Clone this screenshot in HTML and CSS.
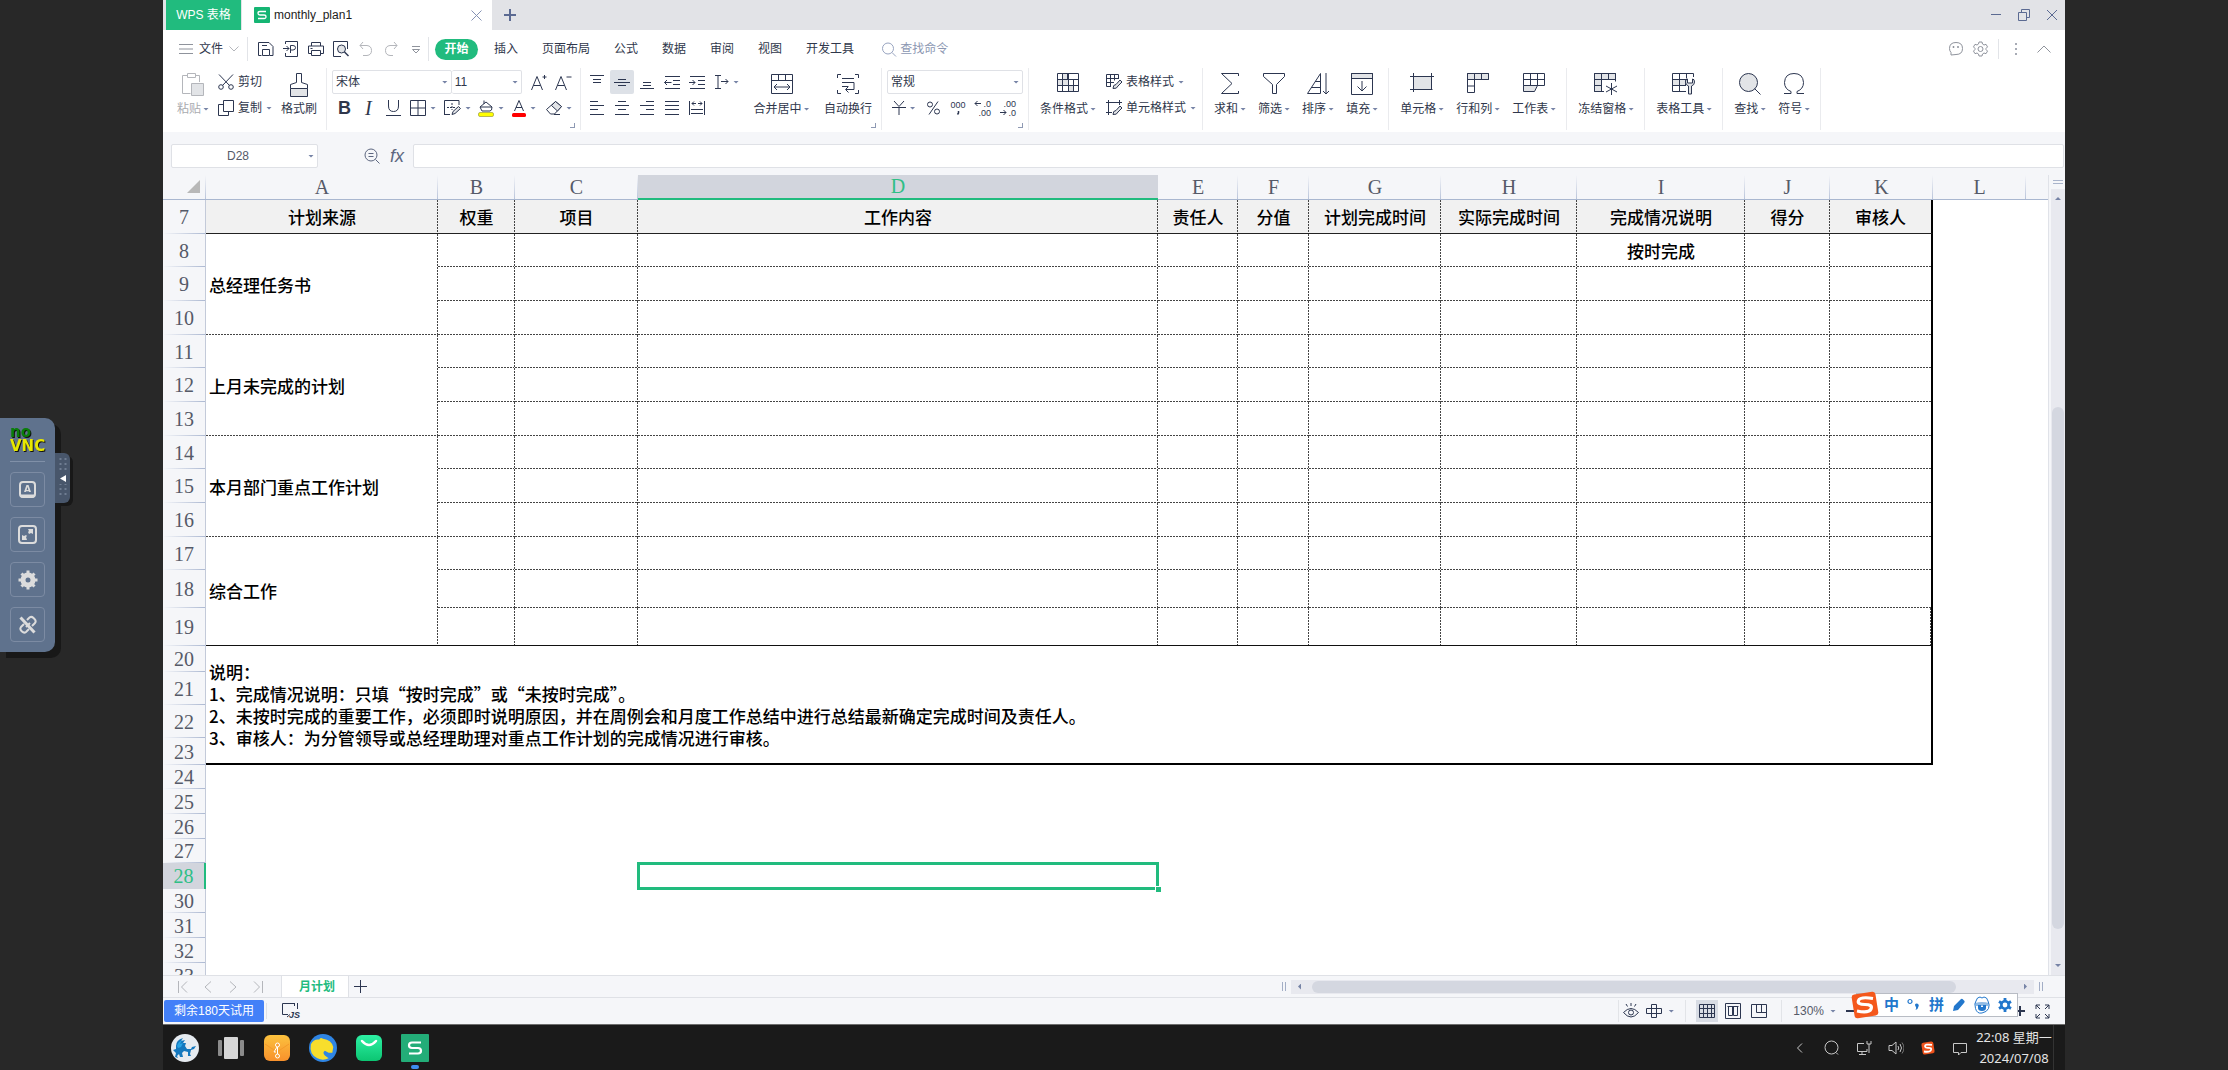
FILE: index.html
```html
<!DOCTYPE html>
<html lang="zh-CN">
<head>
<meta charset="utf-8">
<title>monthly_plan1 - WPS 表格</title>
<link rel="stylesheet" href="styles.css">
</head>
<body>
<aside class="vnc" aria-label="noVNC">
  <div class="vnc-bar">
    <div class="vnc-logo"><span class="vnc-no">no</span><span class="vnc-name">VNC</span></div>
    <button class="vnc-btn" aria-label="键盘"><svg width="19" height="19" viewBox="0 0 19 19"><rect x="2" y="2" width="15" height="15" rx="3" fill="none" stroke="#dcdcdc" stroke-width="2"/><path d="M3 16h13" stroke="#dcdcdc" stroke-width="3"/><text x="9.500" y="12" text-anchor="middle" class="vnc-a">A</text></svg></button>
    <button class="vnc-btn" aria-label="全屏"><svg width="19" height="19" viewBox="0 0 19 19"><rect x="1" y="1" width="17" height="17" rx="3" fill="none" stroke="#dcdcdc" stroke-width="2"/><path d="M10 4h5v5l-2-1-2 1-1-2 1-1zM4 10l2 1 2-1 1 1-1 1 1 3H4z" fill="#dcdcdc"/></svg></button>
    <button class="vnc-btn" aria-label="设置"><svg width="20" height="20" viewBox="0 0 20 20"><circle cx="10" cy="10" r="5" fill="none" stroke="#dcdcdc" stroke-width="5"/><path d="M10 0.500v4M10 15.500v4M0.500 10h4M15.500 10h4M3.500 3.500l3 3M13.500 13.500l3 3M16.500 3.500l-3 3M3.500 16.500l3-3" stroke="#dcdcdc" stroke-width="3"/></svg></button>
    <button class="vnc-btn" aria-label="断开"><svg width="20" height="20" viewBox="0 0 20 20" fill="none" stroke="#dcdcdc" stroke-width="2"><path d="M9 5l2.500-2.500q2-1.500 4 0.500l1 1q2 2 0.500 4L14 11M6 9l-3 3q-1.500 2 0.500 4l0.500 0.500q2 2 4 0.500L11 14M8 12l4-4"/><path d="M2.500 2.500l14 15" stroke-width="3"/></svg></button>
  </div>
  <button class="vnc-handle" aria-label="收起"><svg width="12" height="40" viewBox="0 0 12 40"><path d="M3.500 0v40M8.500 0v40" stroke="#6f7d92" stroke-width="2" stroke-dasharray="2 3"/><path d="M1 14h10v12H1z" fill="#48566b"/><path d="M9 17v7L3 20.500z" fill="#fff"/></svg></button>
</aside>

<main class="app">
  <header class="titlebar">
    <button class="home-tab">WPS 表格</button>
    <div class="doc-tab">
      <svg width="16" height="16" viewBox="0 0 16 16"><rect width="16" height="16" rx="1" fill="#15b573"/><path d="M12 4.500H6Q4 4.500 4 6.200T6 8h4q2 0 2 1.800t-2 1.700H4" fill="none" stroke="#fff" stroke-width="1.300"/></svg>
      <span class="doc-name">monthly_plan1</span>
      <button class="plain" aria-label="关闭标签"><svg class="ic muted" width="11" height="11" viewBox="0 0 11 11"><path d="M.5.5l10 10M10.500.5l-10 10"/></svg></button>
    </div>
    <button class="plain new-tab" aria-label="新建"><svg class="ic slate" width="12" height="12" viewBox="0 0 12 12" stroke-width="2"><path d="M6 0v12M0 6h12"/></svg></button>
    <div class="win-ctl">
      <button class="plain" aria-label="最小化"><svg class="ic slate" width="12" height="12" viewBox="0 0 12 12"><path d="M1 5.500h10"/></svg></button>
      <button class="plain" aria-label="还原"><svg class="ic slate" width="12" height="12" viewBox="0 0 12 12"><path d="M.5 3.500h8v8h-8zM3.500 3.500v-3h8v8h-3"/></svg></button>
      <button class="plain" aria-label="关闭"><svg class="ic slate" width="12" height="12" viewBox="0 0 12 12"><path d="M1 1l10 10M11 1L1 11"/></svg></button>
    </div>
  </header>

  <nav class="menubar">
    <button class="plain file-btn"><svg class="ic grey" width="14" height="12" viewBox="0 0 14 12"><path d="M0 1.500h14M0 6h14M0 10.500h14"/></svg>文件<svg class="ic pale" width="10" height="6" viewBox="0 0 10 6"><path d="M.5.5L5 5 9.500.5"/></svg></button>
    <div class="quick">
      <button class="plain" aria-label="保存"><svg class="ic" width="16" height="16" viewBox="0 0 16 16"><path d="M3.500 14.500h-3V1.500H11l4 4v9h-3M4.500 14.500V8.500h7v6zM4 4.500h5"/></svg></button>
      <button class="plain" aria-label="输出为PDF"><svg class="ic" width="16" height="16" viewBox="0 0 16 16"><path d="M2.500 3V.5h12v15h-12V12M0 7.500h6M3.500 5L6 7.500 3.500 10M7.500 12V4.500H10q2.500 0 2.500 2.200T10 9H8"/></svg></button>
      <button class="plain" aria-label="打印"><svg class="ic" width="16" height="16" viewBox="0 0 16 16"><path d="M3.500 5V1.500h9V5M3.500 12.500h-3V5h15v7.500h-3M3.500 9.500h9v5h-9z"/><path d="M2.500 7.500h2"/></svg></button>
      <button class="plain" aria-label="打印预览"><svg class="ic" width="16" height="16" viewBox="0 0 16 16"><path d="M14.500 8V.5H.5v15H8"/><circle cx="8.500" cy="8" r="4" class="fillg"/><path d="M11.500 11l4 4" stroke-width="1.500"/></svg></button>
      <button class="plain" aria-label="撤销"><svg class="ic pale" width="16" height="16" viewBox="0 0 16 16"><path d="M5 1L2 4.500 5 8M2 4.500h7q4.500.5 4.500 5T9 14.500H5"/></svg></button>
      <button class="plain" aria-label="恢复"><svg class="ic pale" width="16" height="16" viewBox="0 0 16 16"><path d="M11 1l3 3.500L11 8M14 4.500H7q-4.500.5-4.500 5T7 14.500h3"/></svg></button>
      <button class="plain" aria-label="更多"><svg class="ic grey" width="16" height="16" viewBox="0 0 16 16"><path d="M4 5.500h8M4.500 8.500h7L8 12z"/></svg></button>
    </div>
    <div class="menus">
      <button class="plain menu on">开始</button>
      <button class="plain menu">插入</button>
      <button class="plain menu">页面布局</button>
      <button class="plain menu">公式</button>
      <button class="plain menu">数据</button>
      <button class="plain menu">审阅</button>
      <button class="plain menu">视图</button>
      <button class="plain menu">开发工具</button>
    </div>
    <button class="plain find-cmd"><svg class="ic blue" width="15" height="15" viewBox="0 0 15 15"><circle cx="6" cy="6.500" r="5.500"/><path d="M10 10.500l4 4"/></svg>查找命令</button>
    <div class="menu-right">
      <button class="plain" aria-label="反馈"><svg class="ic grey" width="14" height="14" viewBox="0 0 14 14"><path d="M2 13V10.500Q.5 9 .5 6.500.5.500 7 .5t6.500 6q0 6-6.500 6z"/><path d="M4.500 4v2M9 4v2" stroke-width="1.500"/></svg></button>
      <button class="plain" aria-label="设置"><svg class="ic grey" width="15" height="16" viewBox="0 0 15 16"><path d="M5.500 3L6 1h3l.5 2L11 4l2-.7 1.500 2.600L13 7.500v1l1.500 1.600L13 12.700 11 12l-1.500 1L9 15H6l-.5-2L4 12l-2 .7L.5 10.100 2 8.500v-1L.5 5.900 2 3.300 4 4z"/><circle cx="7.500" cy="8" r="2.500"/></svg></button>
      <button class="plain dots" aria-label="更多选项"><svg width="4" height="14" viewBox="0 0 4 14" fill="#8a8f9c"><circle cx="2" cy="2" r="1"/><circle cx="2" cy="7" r="1"/><circle cx="2" cy="12" r="1"/></svg></button>
      <button class="plain" aria-label="折叠功能区"><svg class="ic grey" width="14" height="8" viewBox="0 0 14 8"><path d="M.5 7.500L7 1l6.500 6.500"/></svg></button>
    </div>
  </nav>

  <section class="ribbon" aria-label="开始">
    <div class="group clip">
      <button class="big off"><svg class="ic pale" width="22" height="24" viewBox="0 0 22 24"><path d="M5 2.500H.5v18h8M13 2.500h4.500V9"/><path d="M5.500.5h8v4h-8z"/><path d="M9.500 10.500h12v12h-12z" class="fillg"/></svg><span>粘贴<i class="caret"></i></span></button>
      <div class="stack">
        <button class="mini"><svg class="ic" width="16" height="16" viewBox="0 0 16 16"><path d="M1 .5l10.500 11M15 .5L4.500 11.500"/><circle cx="3" cy="13" r="2.300"/><circle cx="13" cy="13" r="2.300"/></svg>剪切</button>
        <button class="mini"><svg class="ic" width="16" height="16" viewBox="0 0 16 16"><path d="M5.500.5h10v11h-10zM5 4.500H.5v11h10V12"/></svg>复制<i class="caret"></i></button>
      </div>
      <button class="big"><svg class="ic" width="18" height="24" viewBox="0 0 18 24"><path d="M.5 15.500h17v8H.5z" class="fillg"/><path d="M.5 15.500v-4l6-2v-9h5v9l6 2v4"/></svg><span>格式刷</span></button>
    </div>

    <div class="group font">
      <div class="row">
        <label class="pick family"><select aria-label="字体"><option>宋体</option></select><i class="caret"></i></label>
        <label class="pick size"><select aria-label="字号"><option>11</option></select><i class="caret"></i></label>
        <button class="tool grow" aria-label="增大字号"><svg class="ic" width="17" height="17" viewBox="0 0 17 17"><path d="M.5 16L6 2.500 11.500 16M2.500 11.500h7M13.500 1v4M11.500 3h4"/></svg></button>
        <button class="tool grow" aria-label="减小字号"><svg class="ic" width="17" height="17" viewBox="0 0 17 17"><path d="M.5 16L6 2.500 11.500 16M2.500 11.500h7M11.500 3h5"/></svg></button>
      </div>
      <div class="row marks">
        <button class="tool" aria-label="加粗"><b class="tb">B</b></button>
        <button class="tool" aria-label="倾斜"><span class="ti">I</span></button>
        <button class="tool" aria-label="下划线"><svg class="ic" width="15" height="16" viewBox="0 0 15 16"><path d="M2.500 0v6q0 5.500 5 5.500t5-5.500V0M0 15.500h15"/></svg></button>
        <button class="tool" aria-label="边框"><svg class="ic" width="16" height="16" viewBox="0 0 16 16"><path d="M.5.5h15v15H.5zM8 .5v15M.5 8h15"/></svg><i class="caret"></i></button>
        <button class="tool" aria-label="绘制边框"><svg class="ic" width="17" height="16" viewBox="0 0 17 16"><path d="M.5 15V.5H15V5M.5 14.500H6"/><path d="M3 7.500h8M8 3v7" stroke-dasharray="2 1"/><path d="M8 14.500l1-3 5.500-5 2 2-5.500 5z" class="fillg"/></svg><i class="caret"></i></button>
        <button class="tool" aria-label="填充颜色"><svg class="ic" width="16" height="17" viewBox="0 0 16 17"><path d="M2 7l6-5 6 5q0 4-2 4H4zM2 7h12M6 4V.5"/><rect x=".5" y="12.500" width="15" height="4" rx="1.500" fill="#ff0" stroke="#8a8a30" stroke-width=".6"/></svg><i class="caret"></i></button>
        <button class="tool" aria-label="字体颜色"><svg class="ic" width="14" height="17" viewBox="0 0 14 17"><path d="M2.500 11L7 .5 11.500 11M4 7.500h6"/><rect y="13" width="14" height="4" rx="1.500" fill="#f00" stroke="none"/></svg><i class="caret"></i></button>
        <button class="tool" aria-label="清除"><svg class="ic" width="16" height="16" viewBox="0 0 16 16"><path d="M9.500 1.500l6 5-7 7.500H4.500L.5 9.500z"/><path d="M9.500 1.500l6 5-4 4.500L5.500 5.500z" class="fillg"/><path d="M8 14.500h6"/></svg><i class="caret"></i></button>
      </div>
      <i class="corner"></i>
    </div>

    <div class="group align">
      <div>
        <div class="row icons">
          <button class="tool" aria-label="顶端对齐"><svg class="ic" width="16" height="16" viewBox="0 0 16 16"><path d="M1 1.500h14M4 5.500h8M4 8.500h8"/></svg></button>
          <button class="tool on" aria-label="垂直居中"><svg class="ic" width="16" height="16" viewBox="0 0 16 16"><path d="M4 5.500h8M0 8.500h16M4 11.500h8"/></svg></button>
          <button class="tool" aria-label="底端对齐"><svg class="ic" width="16" height="16" viewBox="0 0 16 16"><path d="M4 8.500h8M4 11.500h8M1 14.500h14"/></svg></button>
          <button class="tool" aria-label="减少缩进"><svg class="ic" width="16" height="16" viewBox="0 0 16 16"><path d="M1 2.500h15M9 6.500h7M9 10.500h7M1 14.500h15M.5 8.500h7M3 6L.5 8.500 3 11"/></svg></button>
          <button class="tool" aria-label="增加缩进"><svg class="ic" width="16" height="16" viewBox="0 0 16 16"><path d="M1 2.500h15M9 6.500h7M9 10.500h7M1 14.500h15M0 8.500h6M3.500 6L6 8.500 3.500 11"/></svg></button>
          <button class="tool wide" aria-label="文字方向"><svg class="ic" width="15" height="14" viewBox="0 0 15 14"><path d="M1 .5h6M4 .5v13M1 13.500h6M7 6.500h7M11.500 4L14 6.500 11.500 9"/></svg><i class="caret"></i></button>
        </div>
        <div class="row icons">
          <button class="tool" aria-label="左对齐"><svg class="ic" width="14" height="14" viewBox="0 0 14 14"><path d="M0 .5h8M0 4.500h14M0 8.500h8M0 13.500h14"/></svg></button>
          <button class="tool" aria-label="水平居中"><svg class="ic" width="14" height="14" viewBox="0 0 14 14"><path d="M3 .5h8M0 4.500h14M3 8.500h8M0 13.500h14"/></svg></button>
          <button class="tool" aria-label="右对齐"><svg class="ic" width="14" height="14" viewBox="0 0 14 14"><path d="M6 .5h8M0 4.500h14M6 8.500h8M0 13.500h14"/></svg></button>
          <button class="tool" aria-label="两端对齐"><svg class="ic" width="14" height="14" viewBox="0 0 14 14"><path d="M0 .5h14M0 4.500h14M0 8.500h14M0 13.500h14"/></svg></button>
          <button class="tool" aria-label="分散对齐"><svg class="ic" width="16" height="14" viewBox="0 0 16 14"><path d="M.5 0v14M15.500 0v14M3 2.500h4M9 2.500h4M5 .5l-2 2 2 2M11 .5l2 2-2 2M2 8.500h12M2 12.500h12"/></svg></button>
        </div>
      </div>
      <button class="big"><svg class="ic" width="22" height="22" viewBox="0 0 22 22"><path d="M.5 1.500h21v19H.5zM.5 7.500h21M7.500 1.500v6M14.500 1.500v6M3 14h16M6 11l-3 3 3 3M16 11l3 3-3 3"/></svg><span>合并居中<i class="caret"></i></span></button>
      <button class="big"><svg class="ic" width="22" height="22" viewBox="0 0 22 22"><path d="M.5 5V1.500H4M18 1.500h3.500V5M.5 17v3.500H4M18 20.500h3.500V17M5 5.500h12M5 9.500h12M5 13.500h6M17 9.500v7H9M11.500 13.500l-3 3 3 3"/></svg><span>自动换行</span></button>
      <i class="corner"></i>
    </div>

    <div class="group number">
      <div class="row"><label class="pick format"><select aria-label="数字格式"><option>常规</option></select><i class="caret"></i></label></div>
      <div class="row icons">
        <button class="tool wide" aria-label="货币"><svg class="ic" width="14" height="14" viewBox="0 0 14 14"><path d="M2 0l5 5.500L12 0M0 6.500h14M7 6v8"/></svg><i class="caret"></i></button>
        <button class="tool" aria-label="百分比"><svg class="ic" width="13" height="14" viewBox="0 0 13 14"><circle cx="3" cy="3.500" r="2.500"/><circle cx="10" cy="10.500" r="2.500"/><path d="M11 .5L2 13.500"/></svg></button>
        <button class="tool" aria-label="千位分隔"><svg class="ic" width="18" height="16" viewBox="0 0 18 16"><text x="9" y="8" text-anchor="middle" class="tiny">000</text><path d="M9.500 11v2l-1 1.500" stroke-width="1.500"/></svg></button>
        <button class="tool" aria-label="增加小数位"><svg class="ic" width="18" height="16" viewBox="0 0 18 16"><text x="17" y="7" text-anchor="end" class="tiny">.0</text><text x="17" y="16" text-anchor="end" class="tiny">.00</text><path d="M1 3.500h6M3.500 1L1 3.500 3.500 6"/></svg></button>
        <button class="tool" aria-label="减少小数位"><svg class="ic" width="18" height="16" viewBox="0 0 18 16"><text x="17" y="7" text-anchor="end" class="tiny">.00</text><text x="17" y="16" text-anchor="end" class="tiny">.0</text><path d="M1 12.500h6M4.500 10L7 12.500 4.500 15"/></svg></button>
      </div>
      <i class="corner"></i>
    </div>

    <div class="group style">
      <button class="big"><svg class="ic" width="22" height="20" viewBox="0 0 22 20"><path d="M5.500.5h5v6h-5zM.5 6.500h11v6H.5zM11.500 12.500h5v6h-5z" class="fillg"/><path d="M.5.5h21v18H.5zM.5 6.500h21M.5 12.500h21M5.500.5v18M11.500.5v12M16.500 6.500v12"/></svg><span>条件格式<i class="caret"></i></span></button>
      <div class="stack">
        <button class="mini"><svg class="ic" width="16" height="16" viewBox="0 0 16 16"><path d="M5 12.500H.5V.5h12V5M.5 4.500h12M.5 8.500H8M4.500.5v12M8.500.5v6"/><path d="M7 14.500q0-4 3-4l4-4.500 2 2-4 4q-1 3-5 2.500z" class="fillg"/></svg>表格样式<i class="caret"></i></button>
        <button class="mini"><svg class="ic" width="16" height="16" viewBox="0 0 16 16"><path d="M2.500 0v15M0 2.500h16M13.500 0v5M0 12.500h6"/><path d="M7 14.500q0-4 3-4l4-4.500 2 2-4 4q-1 3-5 2.500z" class="fillg"/></svg>单元格样式<i class="caret"></i></button>
      </div>
    </div>

    <div class="group">
      <button class="big"><svg class="ic" width="22" height="22" viewBox="0 0 22 22"><path d="M19.500 3V.5h-17L13 10.500 2.500 20.500h17V18"/></svg><span>求和<i class="caret"></i></span></button>
      <button class="big"><svg class="ic" width="22" height="22" viewBox="0 0 22 22"><path d="M.5.5h21v3l-8 8v9h-4v-9l-9-8z"/></svg><span>筛选<i class="caret"></i></span></button>
      <button class="big"><svg class="ic" width="22" height="22" viewBox="0 0 22 22"><path d="M.5 20.500L13.500.5v20M.5 20.500h13M4 14.500h9.500M8 8.500h5.500M19 0v21M16 18l3 3 3-3"/></svg><span>排序<i class="caret"></i></span></button>
      <button class="big"><svg class="ic" width="22" height="22" viewBox="0 0 22 22"><path d="M.5.5h21v5H.5z" class="fillg"/><path d="M.5.5h21v21H.5zM11 8v10M6.500 13.500L11 18l4.500-4.500"/></svg><span>填充<i class="caret"></i></span></button>
    </div>

    <div class="group">
      <button class="big"><svg class="ic" width="24" height="20" viewBox="0 0 24 20"><path d="M3.500 3.500h18v13h-18z" class="fillg"/><path d="M3.500 0v19M21.500 0v14M0 3.500h24M0 16.500h19M20.500 16.500h2"/></svg><span>单元格<i class="caret"></i></span></button>
      <button class="big"><svg class="ic" width="22" height="20" viewBox="0 0 22 20"><path d="M.5.5h21v6H.5z" class="fillg"/><path d="M.5.5h21v6H.5zM.5 6.500h7v13h-7zM7.500.5v6M14.500.5v6M.5 13h7"/></svg><span>行和列<i class="caret"></i></span></button>
      <button class="big"><svg class="ic" width="22" height="20" viewBox="0 0 22 20"><path d="M.5 12.500h14l-3 6H.5z" class="fillg"/><path d="M.5.5h21v12H.5zM.5 6.500h21M7.500.5v12M14.500.5v12"/></svg><span>工作表<i class="caret"></i></span></button>
    </div>
    <div class="group">
      <button class="big"><svg class="ic" width="24" height="22" viewBox="0 0 24 22"><path d="M.5.5h21v6h-14v12h-7z" class="fillg"/><path d="M.5.5h21v8M.5.5v18H10M.5 6.500h21M.5 12.500h7M7.500.5v18M14.500.5v6M17.500 10v12M12 13l11 6M12 19l11-6"/></svg><span>冻结窗格<i class="caret"></i></span></button>
    </div>
    <div class="group">
      <button class="big"><svg class="ic" width="24" height="22" viewBox="0 0 24 22"><path d="M.5 6.500h13v6H.5z" class="fillg"/><path d="M.5.5h21V4M.5.5v18H14M.5 6.500H14M.5 12.500H14M7.500.5v18M14.500.5v5"/><path d="M16.500 21v-8q-3-1-3-4t2-3v4h5V6q2 0 2 3t-3 4v8z" class="fillg"/></svg><span>表格工具<i class="caret"></i></span></button>
    </div>
    <div class="group last">
      <button class="big"><svg class="ic" width="22" height="22" viewBox="0 0 22 22"><circle cx="9.500" cy="9.500" r="9" class="fillg"/><path d="M15.500 15.500l6 6"/></svg><span>查找<i class="caret"></i></span></button>
      <button class="big"><svg class="ic" width="22" height="22" viewBox="0 0 22 22"><path d="M1 20.500h7v-2Q1.500 16 1.500 9.500 2 .5 11 .5t9.500 9q0 6.500-6.500 9v2h7"/></svg><span>符号<i class="caret"></i></span></button>
    </div>
  </section>

  <div class="formula">
    <label class="pick name"><input aria-label="名称框" value="D28"><i class="caret"></i></label>
    <button class="plain" aria-label="缩放"><svg class="ic grey2" width="16" height="16" viewBox="0 0 16 16"><circle cx="7" cy="7" r="6"/><path d="M4.500 5.500h5M4.500 8.500h5M11.500 11.500l4 4"/></svg></button>
    <button class="plain fx">fx</button>
    <input class="fx-input" aria-label="编辑栏">
  </div>

  <div class="sheet-wrap">
    <div class="sheet">
      <table class="grid">
        <colgroup><col class="c-head"><col class="c-a"><col class="c-b"><col class="c-c"><col class="c-d"><col class="c-e"><col class="c-f"><col class="c-g"><col class="c-h"><col class="c-i"><col class="c-j"><col class="c-k"><col class="c-l"><col></colgroup>
        <thead><tr><th class="all"><svg width="13" height="13" viewBox="0 0 13 13"><path d="M13 0v13H0z" fill="#b8b8b8"/></svg></th><th>A</th><th>B</th><th>C</th><th class="on">D</th><th>E</th><th>F</th><th>G</th><th>H</th><th>I</th><th>J</th><th>K</th><th>L</th><th></th></tr></thead>
        <tbody>
          <tr class="h34 title"><th>7</th><td>计划来源</td><td>权重</td><td>项目</td><td>工作内容</td><td>责任人</td><td>分值</td><td>计划完成时间</td><td>实际完成时间</td><td>完成情况说明</td><td>得分</td><td>审核人</td><td colspan="2"></td></tr>
          <tr class="h33 line"><th>8</th><td rowspan="3" class="src">总经理任务书</td><td></td><td></td><td></td><td></td><td></td><td></td><td></td><td>按时完成</td><td></td><td></td><td colspan="2"></td></tr>
          <tr class="h34 line"><th>9</th><td></td><td></td><td></td><td></td><td></td><td></td><td></td><td></td><td></td><td></td><td colspan="2"></td></tr>
          <tr class="h34 line"><th>10</th><td></td><td></td><td></td><td></td><td></td><td></td><td></td><td></td><td></td><td></td><td colspan="2"></td></tr>
          <tr class="h33 line"><th>11</th><td rowspan="3" class="src">上月未完成的计划</td><td></td><td></td><td></td><td></td><td></td><td></td><td></td><td></td><td></td><td></td><td colspan="2"></td></tr>
          <tr class="h34 line"><th>12</th><td></td><td></td><td></td><td></td><td></td><td></td><td></td><td></td><td></td><td></td><td colspan="2"></td></tr>
          <tr class="h34 line"><th>13</th><td></td><td></td><td></td><td></td><td></td><td></td><td></td><td></td><td></td><td></td><td colspan="2"></td></tr>
          <tr class="h33 line"><th>14</th><td rowspan="3" class="src">本月部门重点工作计划</td><td></td><td></td><td></td><td></td><td></td><td></td><td></td><td></td><td></td><td></td><td colspan="2"></td></tr>
          <tr class="h34 line"><th>15</th><td></td><td></td><td></td><td></td><td></td><td></td><td></td><td></td><td></td><td></td><td colspan="2"></td></tr>
          <tr class="h34 line"><th>16</th><td></td><td></td><td></td><td></td><td></td><td></td><td></td><td></td><td></td><td></td><td colspan="2"></td></tr>
          <tr class="h33 line"><th>17</th><td rowspan="3" class="src end">综合工作</td><td></td><td></td><td></td><td></td><td></td><td></td><td></td><td></td><td></td><td></td><td colspan="2"></td></tr>
          <tr class="h38 line"><th>18</th><td></td><td></td><td></td><td></td><td></td><td></td><td></td><td></td><td></td><td></td><td colspan="2"></td></tr>
          <tr class="h38 line end"><th>19</th><td></td><td></td><td></td><td></td><td></td><td></td><td></td><td></td><td></td><td></td><td colspan="2"></td></tr>
          <tr class="h26"><th>20</th><td rowspan="4" colspan="11" class="note">说明：<br>1、完成情况说明：只填“按时完成”或“未按时完成”。<br>2、未按时完成的重要工作，必须即时说明原因，并在周例会和月度工作总结中进行总结最新确定完成时间及责任人。<br>3、审核人：为分管领导或总经理助理对重点工作计划的完成情况进行审核。</td><td colspan="2"></td></tr>
          <tr class="h33"><th>21</th><td colspan="2"></td></tr>
          <tr class="h33"><th>22</th><td colspan="2"></td></tr>
          <tr class="h27"><th>23</th><td colspan="2"></td></tr>
          <tr class="h24"><th>24</th><td colspan="13"></td></tr>
          <tr class="h25"><th>25</th><td colspan="13"></td></tr>
          <tr class="h25"><th>26</th><td colspan="13"></td></tr>
          <tr class="h24"><th>27</th><td colspan="13"></td></tr>
          <tr class="h26"><th class="on">28</th><td colspan="3"></td><td class="sel"><i></i></td><td colspan="9"></td></tr>
          <tr class="h24"><th>30</th><td colspan="13"></td></tr>
          <tr class="h25"><th>31</th><td colspan="13"></td></tr>
          <tr class="h25"><th>32</th><td colspan="13"></td></tr>
          <tr class="h25"><th>33</th><td colspan="13"></td></tr>
        </tbody>
      </table>
    </div>
    <div class="vscroll">
      <i class="split"></i>
      <div class="vtrack"><i class="tri up"></i><i class="vthumb"></i><i class="caret"></i></div>
    </div>
  </div>

  <div class="tabs">
    <div class="tab-nav">
      <button class="plain" aria-label="第一张"><svg class="ic pale" width="10" height="12" viewBox="0 0 10 12"><path d="M.5 0v12M9 .5L3.500 6 9 11.500"/></svg></button>
      <button class="plain" aria-label="上一张"><svg class="ic pale" width="10" height="12" viewBox="0 0 10 12"><path d="M8 .5L2 6l6 5.500"/></svg></button>
      <button class="plain" aria-label="下一张"><svg class="ic pale" width="10" height="12" viewBox="0 0 10 12"><path d="M2 .5L8 6l-6 5.500"/></svg></button>
      <button class="plain" aria-label="最后一张"><svg class="ic pale" width="10" height="12" viewBox="0 0 10 12"><path d="M9.500 0v12M1 .5L6.500 6 1 11.500"/></svg></button>
    </div>
    <button class="sheet-tab">月计划</button>
    <button class="plain add" aria-label="新建工作表"><svg class="ic" width="13" height="13" viewBox="0 0 13 13"><path d="M6.500 0v13M0 6.500h13"/></svg></button>
    <div class="hscroll"><i class="bars"></i><div class="htrack"><i class="tri left"></i><i class="hthumb"></i><i class="tri right"></i></div><i class="bars"></i></div>
  </div>

  <footer class="status">
    <button class="trial">剩余180天试用</button>
    <button class="plain macro" aria-label="宏"><svg class="ic" width="17" height="16" viewBox="0 0 17 16"><path d="M6 11.500H.5V.5h12M15.500 0v6M12.500 0v3M5 14l3-2.500"/><text x="7" y="15" class="js">JS</text></svg></button>
    <div class="status-right">
      <div class="seg eye">
        <button class="plain" aria-label="护眼模式"><svg class="ic" width="16" height="16" viewBox="0 0 16 16"><path d="M.5 9.500Q8 1.500 15.500 9.500 8 18.500.5 9.500zM8 0v3M3 1l1.500 2.500M13 1l-1.500 2.500"/><circle cx="8" cy="9.500" r="2.500"/></svg></button>
        <button class="plain" aria-label="阅读模式"><svg class="ic" width="16" height="16" viewBox="0 0 16 16"><path d="M5.500 1.500h5v13h-5zM.5 5.500h15v5H.5z"/></svg><i class="caret"></i></button>
      </div>
      <div class="seg views">
        <button class="plain on" aria-label="普通视图"><svg class="ic" width="16" height="14" viewBox="0 0 16 14"><path d="M.5.500h15v13H.5zM.5 4.500h15M.5 9.500h15M4.500.5v13M8.500.5v13M12.500.5v13"/></svg></button>
        <button class="plain" aria-label="页面布局"><svg class="ic" width="16" height="16" viewBox="0 0 16 16"><path d="M.5.5h15v15H.5zM2.500 3.500h11M3.500 3.500v9h4v-9M8.500 3.500v9h4v-9"/></svg></button>
        <button class="plain" aria-label="分页预览"><svg class="ic" width="16" height="14" viewBox="0 0 16 14"><path d="M.5.5h15v13H.5zM5.500.5v8h5v-8M15 8.500h-5"/></svg></button>
      </div>
      <div class="seg zoom">
        <button class="plain">130%<i class="caret"></i></button>
        <button class="plain" aria-label="缩小"><svg class="ic" width="10" height="10" viewBox="0 0 10 10" stroke-width="2"><path d="M0 5h10"/></svg></button>
        <button class="plain plus" aria-label="放大"><svg class="ic" width="10" height="10" viewBox="0 0 10 10" stroke-width="2"><path d="M0 5h10M5 0v10"/></svg></button>
        <button class="plain" aria-label="全屏显示"><svg class="ic" width="15" height="15" viewBox="0 0 15 15"><path d="M1 5V1h4M1 1l4 4M10 1h4v4M14 1l-4 4M1 10v4h4M1 14l4-4M14 10v4h-4M14 14l-4-4"/></svg></button>
      </div>
      <div class="ime">
        <svg class="ime-logo" width="28" height="28" viewBox="0 0 28 28"><rect x="2" y="2" width="24" height="24" rx="3" fill="#f4581c" transform="rotate(-9 14 14)"/><path d="M22 7.500Q9 5.500 7.500 9.500T14 13.500t6 4.500-14 2" fill="none" stroke="#fff" stroke-width="3.200"/></svg>
        <span>中</span>
        <svg width="14" height="14" viewBox="0 0 14 14"><circle cx="3" cy="3.500" r="2" fill="none" stroke="#2277cc" stroke-width="1.200"/><path d="M8 6.500a2 2 0 1 1 3.500 2Q11 11.500 8.500 12 9.500 10.500 9 9 8 8 8 6.500z" fill="#2277cc"/></svg>
        <span>拼</span>
        <svg width="14" height="14" viewBox="0 0 14 14"><path d="M1 13l1-5L8.500 1.500q1-1 2-.5l2 2q.5 1-.5 2L6 12z" fill="#2277cc"/></svg>
        <svg width="16" height="18" viewBox="0 0 16 18"><path d="M2 5Q3 1 6 1l2 1 2-1q3 0 4 4 2 4 .5 7.500T8 17t-6.500-4.500T2 5z" fill="none" stroke="#2277cc"/><path d="M1 7q7-2 14 0l-1 3H2z" fill="#2277cc" opacity=".5"/><path d="M4 9h3v2h2V9h3v3q0 3-4 3t-4-3z" fill="#2277cc"/></svg>
        <svg width="14" height="14" viewBox="0 0 14 14"><circle cx="7" cy="7" r="3.700" fill="none" stroke="#2277cc" stroke-width="2.600"/><path d="M7 0v3M7 11v3M1 3.500l2.500 1.500M10.500 9l2.500 1.500M13 3.500L10.500 5M3.500 9L1 10.500" stroke="#2277cc" stroke-width="2.800"/></svg>
      </div>
    </div>
  </footer>

  <div class="taskbar">
    <div class="apps">
      <button class="plain" aria-label="开始菜单"><svg width="28" height="28" viewBox="0 0 28 28"><circle cx="14" cy="14" r="14" fill="#e6ebf0"/><path d="M5 12Q5 6 12 4l-2 3 4-1-2 3 3 0-1 3 2 3 4 0 1-2 4-1-2 3-3 1-1 4 1 2-3 0 0-4-4-1-2 2 1 4-3 0-1-3-2 2 1 2-3-1 1-4-3-3 3-1z" fill="#1478be"/><path d="M6 12q1-4 5-6l-2 4 3-1-2 4-3 1z" fill="#29a3e3"/></svg></button>
      <button class="plain" aria-label="任务视图"><svg width="28" height="24" viewBox="0 0 28 24"><rect x="7" y="1" width="14" height="22" rx="1" fill="#d6d6d6"/><rect x="1" y="4" width="4" height="16" rx="1" fill="#8c8c8c"/><rect x="23" y="4" width="4" height="16" rx="1" fill="#8c8c8c"/></svg></button>
      <button class="plain" aria-label="压缩工具"><svg width="28" height="28" viewBox="0 0 28 28"><defs><linearGradient id="or" x2="0" y2="1"><stop stop-color="#fcc23e"/><stop offset="1" stop-color="#f8912c"/></linearGradient></defs><rect x="1" y="1" width="26" height="26" rx="6" fill="url(#or)"/><path d="M2 10l12 8 12-8" fill="none" stroke="#f59a2a"/><path d="M14.500 10v12M14 13l-3 5h2" stroke="#fff" fill="none"/><circle cx="14.500" cy="11" r="2" fill="#f9a035" stroke="#fff"/><circle cx="14.500" cy="22" r="2" fill="#f9a035" stroke="#fff"/></svg></button>
      <button class="plain" aria-label="浏览器"><svg width="28" height="28" viewBox="0 0 30 30"><circle cx="15" cy="15" r="15" fill="#2f85e4"/><path d="M2 11Q5 5 11 6q1-3 4-1 9 1 11 9l-1 6-4 0-4-2q-3 2 0 5l4 3q-6 3-12 0Q0 22 2 11z" fill="#f8de2c"/></svg></button>
      <button class="plain" aria-label="应用商店"><svg width="28" height="28" viewBox="0 0 28 28"><defs><linearGradient id="gr" x2="0" y2="1"><stop stop-color="#2df0a4"/><stop offset="1" stop-color="#0cc572"/></linearGradient></defs><rect x="1" y="1" width="26" height="26" rx="6" fill="url(#gr)"/><path d="M7 7q7 8 14 0" fill="none" stroke="#fff" stroke-width="2.500" stroke-linecap="round"/></svg></button>
      <button class="plain active" aria-label="WPS 表格"><svg width="28" height="28" viewBox="0 0 28 28"><rect width="28" height="28" rx="1" fill="#23ad78"/><path d="M20 8.500h-9q-3 0-3 2.700T11 14h6q3 0 3 2.700t-3 2.800H8" fill="none" stroke="#fff" stroke-width="2.200"/></svg></button>
    </div>
    <div class="tray">
      <svg class="tray-ic" width="16" height="16" viewBox="0 0 16 16"><path d="M10 3.500L5.500 8l4.500 4.500"/></svg>
      <svg class="tray-ic" width="16" height="16" viewBox="0 0 16 16"><circle cx="7.500" cy="7.500" r="6.500"/><path d="M12 12.500l2 2"/></svg>
      <svg class="tray-ic" width="16" height="16" viewBox="0 0 16 16"><path d="M8 3.500H1.500v8H11V9M6 11.500v3M3 14.500h7M11 1v3h4V1M13 4v9"/></svg>
      <svg class="tray-ic" width="16" height="16" viewBox="0 0 16 16"><path d="M1 5.500h3L8 2v12L4 10.500H1zM10 6q1.500 2 0 4M12 4q3 4 0 8"/><path d="M14 2.500q4 5.500 0 11" stroke="#777"/></svg>
      <svg width="16" height="16" viewBox="0 0 16 16"><rect x="2" y="2" width="12" height="12" rx="2" fill="#f0531c" transform="rotate(-9 8 8)"/><path d="M12 4.800Q5 4 5 6t3.500 1.800T11 10t-7 1.500" fill="none" stroke="#fff" stroke-width="1.800"/></svg>
      <svg class="tray-ic" width="16" height="16" viewBox="0 0 16 16"><path d="M1.500 3.500h13v9H9L6.500 15v-2.500h-5z"/></svg>
    </div>
    <time class="clock">22:08 星期一<br>2024/07/08</time>
    <i class="desk"></i>
  </div>
</main>
</body>
</html>
```
FILE: styles.css
```css
* { box-sizing: border-box; }

body {
  margin: 0;
  background: #282828;
  color: #2f374b;
  font: 12px/16px "Liberation Sans", "Noto Sans CJK SC", sans-serif;
}

button, input, select {
  font: inherit;
  color: inherit;
  margin: 0;
  padding: 0;
  border: 0;
  background: none;
  border-radius: 0;
}

svg { display: block; flex: none; }

.app {
  margin: 0 163px;
  height: 100vh;
  display: flex;
  flex-direction: column;
  background: #f5f6f9;
  overflow: hidden;
}

.ic { fill: none; stroke: #2c3650; overflow: visible; }
.ic.grey { stroke: #8f939c; }
.ic.grey2 { stroke: #5d6780; }
.ic.pale { stroke: #b4b6bb; }
.ic.blue { stroke: #98a4c0; }
.ic.slate { stroke: #5b6a92; }
.ic.muted { stroke: #8592b4; }
.ic .fillg { fill: #e2e4e7; }
.ic text { stroke: none; fill: #2c3650; }

.caret {
  flex: none;
  display: block;
  width: 6px;
  height: 3px;
  background: #7683a6;
  clip-path: polygon(0 0, 100% 0, 50% 100%);
}

.plain { display: flex; align-items: center; justify-content: center; flex: none; }

/* title bar */
.titlebar { flex: none; display: flex; height: 30px; background: #e2e3e7; padding-left: 3px; }
.home-tab { width: 75px; background: #21bb7e; color: #fff; }
.doc-tab { width: 250px; background: #fff; display: flex; align-items: center; padding: 0 10px 0 12px; gap: 4px; margin-left: 1px; }
.doc-name { flex: 1; color: #1c1c1c; }
.new-tab { width: 36px; }
.win-ctl { margin-left: auto; display: flex; gap: 16px; padding-right: 7px; }

/* menu bar */
.menubar { flex: none; height: 38px; background: #fff; display: flex; align-items: center; padding-right: 14px; }
.file-btn { margin-left: 16px; gap: 6px; padding-right: 8px; height: 24px; border-right: 1px solid #e2e4e8; }
.quick { display: flex; gap: 9px; padding: 0 4px 0 10px; height: 24px; border-right: 1px solid #e2e4e8; }
.menus { display: flex; padding-left: 6px; gap: 24px; }
.menu.on { width: 43px; height: 21px; border-radius: 11px; background: #21bb7e; color: #fff; font-weight: 700; }
.menu.on + .menu { margin-left: -8px; }
.find-cmd { margin-left: 28px; gap: 3px; color: #8c97b2; }
.menu-right { margin-left: auto; display: flex; align-items: center; gap: 10px; }
.menu-right .dots { padding: 0 9px 0 15px; height: 20px; border-left: 1px solid #e2e4e8; }

/* ribbon */
.ribbon { flex: none; height: 64px; background: #fff; display: flex; }
.group { position: relative; flex: none; height: 62px; padding: 2px 10px 0 11px; display: flex; gap: 12px; border-right: 1px solid #eaebee; white-space: nowrap; }
.group > .corner { position: absolute; right: 5px; bottom: 2px; width: 5px; height: 5px; border: solid #8e99b3; border-width: 0 1px 1px 0; }
.big { display: flex; flex-direction: column; align-items: center; justify-content: space-between; height: 47px; padding-top: 3px; }
.big span { display: flex; align-items: center; gap: 2px; }
.big.off { color: #a9abb0; }
.stack { display: flex; flex-direction: column; gap: 6px; padding-top: 2px; }
.mini { display: flex; align-items: center; gap: 4px; height: 20px; }
.row { display: flex; align-items: center; height: 24px; }
.row + .row { margin-top: 1px; height: 26px; }
.tool { display: flex; align-items: center; justify-content: center; gap: 4px; height: 24px; flex: none; }
.tool.on { background: #dde1e7; border-radius: 2px; }

.clip { padding: 2px 9px 0 14px; gap: 9px; }

.font, .number { flex-direction: column; gap: 0; padding: 2px 5px 0; }
.font { width: 254px; }
.number { width: 147px; }
.pick { display: flex; align-items: center; height: 24px; border: 1px solid #dfe1e6; border-radius: 2px; background: #fff; padding-right: 3px; }
.pick select, .pick input { appearance: none; flex: 1; min-width: 0; padding-left: 3px; }
.family { width: 121px; }
.size { width: 71px; border-left: 0; }
.format { width: 137px; }
.grow { width: 24px; }
.grow:nth-child(3) { margin-left: 5px; }
.marks { padding-left: 6px; }
.marks .tool { width: 34px; justify-content: flex-start; }
.marks .tool:nth-child(-n+3) { width: 24px; }
.tb { font-size: 18px; }
.ti { font: italic 20px/20px "Liberation Serif", serif; padding-left: 3px; }

.align { width: 301px; padding: 2px 9px 0 4px; gap: 0; justify-content: space-between; }
.align > .big + .big { padding-left: 4px; }
.icons { gap: 1px; }
.icons .tool { width: 24px; }
.icons .tool.wide { width: 33px; }
.tiny { font-size: 9px; }
.style { padding-right: 6px; gap: 10px; }

/* formula bar */
.formula { flex: none; display: flex; align-items: center; padding: 12px 1px 7px 8px; }
.pick.name { width: 147px; margin-right: 46px; }
.name input { text-align: center; color: #555b69; padding: 0 4px 0 0; }
.fx { font: italic 18px/20px "Liberation Sans", sans-serif; color: #5d6780; margin: 0 9px 0 10px; }
.fx-input { flex: 1; height: 24px; border: 1px solid #dfe1e6; border-radius: 2px; background: #fff; }

/* sheet */
.sheet-wrap { flex: 1; min-height: 0; display: flex; }
.sheet { flex: 1; min-width: 0; overflow: hidden; background: #fff; }
.grid { width: 100%; table-layout: fixed; border-collapse: separate; border-spacing: 0; }
.c-head { width: 43px; }
.c-a { width: 232px; }
.c-b { width: 77px; }
.c-c { width: 123px; }
.c-d { width: 520px; }
.c-e { width: 80px; }
.c-f { width: 71px; }
.c-g { width: 132px; }
.c-h { width: 136px; }
.c-i { width: 168px; }
.c-j { width: 85px; }
.c-k { width: 103px; }
.c-l { width: 93px; }

.grid th {
  padding: 0;
  font: 20px/20px "Liberation Serif", serif;
  color: #555a68;
  background: #f5f6f9;
}
.grid thead th {
  height: 25px;
  padding-bottom: 1px;
  border-bottom: 1px solid #a9b7d0;
  background: linear-gradient(#f5f6f9, #b9c4da) right / 1px 100% no-repeat #f5f6f9;
}
.grid thead th:last-child { background: #f5f6f9; }
.grid thead th.on { background: #d2d5dd; color: #2fbf86; border-bottom: 2px solid #21bb7e; }
.all svg { margin-left: 24px; }
.grid tbody th {
  border-right: 1px solid #c3cad9;
  background: linear-gradient(90deg, #f5f6f9, #adb9d2) bottom / 100% 1px no-repeat #f5f6f9;
}
.grid tbody th.on { background: #d2d5dd; color: #2fbf86; border-right: 2px solid #21bb7e; }

.h24 { height: 24px; }
.h25 { height: 25px; }
.h26 { height: 26px; }
.h27 { height: 27px; }
.h33 { height: 33px; }
.h34 { height: 34px; }
.h38 { height: 38px; }

.grid td {
  padding: 0;
  color: #000;
  font: 500 17px/22px "Noto Sans CJK SC", sans-serif;
  text-align: center;
  white-space: nowrap;
}
.line td:not([colspan]) {
  background:
    repeating-linear-gradient(#444 0 2px, #fff 2px 3px) right / 1px 100% no-repeat,
    repeating-linear-gradient(90deg, #444 0 2px, #fff 2px 3px) bottom / 100% 1px no-repeat;
}
.title td:not([colspan]) {
  border-bottom: 1px solid #222;
  background: repeating-linear-gradient(#444 0 2px, #f1f1f1 2px 3px) right / 1px 100% no-repeat #f1f1f1;
}
.title td:nth-last-child(2) { border-right: 2px solid #000; background: #f1f1f1; }
.line td:nth-last-child(2) {
  border-right: 2px solid #000;
  background: repeating-linear-gradient(90deg, #444 0 2px, #fff 2px 3px) bottom / 100% 1px no-repeat;
}
.grid td.src { text-align: left; padding-left: 3px; }
.grid .end td:not([colspan]), .grid td.src.end {
  border-bottom: 1px solid #111;
  background: repeating-linear-gradient(#444 0 2px, #fff 2px 3px) right / 1px 100% no-repeat;
}
.grid td.note { text-align: left; padding-left: 3px; border-right: 2px solid #000; border-bottom: 2px solid #000; }
.grid td.sel { position: relative; outline: 3px solid #21bb7e; outline-offset: -2px; }
.sel i { position: absolute; right: -3px; bottom: -3px; width: 6px; height: 6px; background: #21bb7e; border: solid #fff; border-width: 1px 0 0 1px; }

.vscroll { flex: none; width: 17px; border-left: 1px solid #e0e2e8; display: flex; flex-direction: column; }
.split { height: 4px; margin: 5px 2px 5px 4px; border: solid #a9b4cb; border-width: 1px 0; }
.vtrack { flex: 1; margin-left: 2px; background: #e8e9ef; display: flex; flex-direction: column; align-items: center; justify-content: space-between; padding: 8px 0; }
.vthumb { width: 12px; height: 522px; border-radius: 6px; background: #d4d7e0; margin-top: 172px; }
.tri { display: block; background: #7683a6; }
.tri.up { width: 6px; height: 3px; clip-path: polygon(50% 0, 100% 100%, 0 100%); }
.tri.left { width: 3px; height: 6px; clip-path: polygon(100% 0, 100% 100%, 0 50%); }
.tri.right { width: 3px; height: 6px; clip-path: polygon(0 0, 100% 50%, 0 100%); }

/* sheet tabs */
.tabs { flex: none; height: 23px; display: flex; align-items: stretch; border-top: 1px solid #dfe1e6; border-bottom: 1px solid #dfe1e6; }
.tab-nav { display: flex; gap: 15px; padding-left: 15px; width: 118px; }
.sheet-tab { width: 68px; background: #fff; border: solid #dfe1e6; border-width: 0 1px; color: #21bb7e; font-weight: 700; padding-left: 4px; }
.add { margin-left: 5px; }
.hscroll { margin-left: auto; width: 783px; display: flex; align-items: center; gap: 5px; padding-right: 22px; }
.bars { width: 4px; height: 9px; border: solid #a3aec6; border-width: 0 1px; }
.htrack { flex: 1; height: 14px; background: #e8e9ef; display: flex; align-items: center; padding: 0 7px; }
.hthumb { width: 644px; height: 12px; border-radius: 6px; background: #d4d7e0; margin: 0 auto 0 11px; }

/* status bar */
.status { position: relative; flex: none; height: 26px; display: flex; align-items: center; padding-left: 1px; }
.trial { width: 100px; height: 22px; border-radius: 2px; background: #4380f8; color: #fff; }
.macro { margin-left: 2px; padding-left: 15px; height: 16px; border-left: 1px solid #dfe1e6; }
.js { font: italic 700 9px "Liberation Sans", sans-serif; }
.status-right { position: relative; margin-left: auto; display: flex; padding-right: 15px; }
.seg { display: flex; align-items: center; height: 22px; border-left: 1px solid #e2e4e8; padding-left: 4px; gap: 7px; }
.seg .plain { gap: 6px; }
.eye { width: 67px; }
.views { width: 96px; padding-left: 10px; gap: 4px; }
.views .plain { height: 22px; width: 22px; }
.views .on { background: #d8dce4; }
.zoom { padding-left: 11px; gap: 10px; color: #555b69; }
.zoom .plus { margin-left: 149px; }
.ime {
  position: absolute;
  right: 47px;
  bottom: 5px;
  width: 162px;
  height: 24px;
  display: flex;
  align-items: center;
  justify-content: space-between;
  padding-right: 5px;
  background: #fff;
  border: 1px solid #b8bcc4;
  color: #2277cc;
  font-size: 15px;
  font-weight: 700;
}
.ime-logo { margin: 0 -3px 0 -6px; }

/* task bar */
.taskbar { flex: none; height: 46px; background: #1a1a1a; border-top: 1px solid #6d6d6d; display: flex; align-items: center; }
.apps { display: flex; gap: 18px; padding-left: 8px; }
.apps .plain { position: relative; height: 45px; width: 28px; }
.active::after { content: ""; position: absolute; bottom: 1px; width: 8px; height: 4px; border-radius: 2px; background: #3d8ff0; }
.tray { margin-left: auto; display: flex; gap: 16px; padding-right: 8px; }
.tray-ic { fill: none; stroke: #c8c8c8; }
.clock { width: 76px; color: #e4e4e4; font: 13px/21px "Noto Sans", "Noto Sans CJK SC", sans-serif; text-align: center; }
.desk { width: 1px; height: 45px; background: #333; margin: 0 11px 0 1px; }

/* remote-control side bar */
.vnc { position: fixed; left: 0; top: 418px; display: flex; }
.vnc-bar { width: 55px; padding: 7px 10px 10px; display: flex; flex-direction: column; gap: 10px; background: #5f728d; border-radius: 0 10px 10px 0; box-shadow: 6px 6px 0 #181818; }
.vnc-logo { display: flex; flex-direction: column; height: 37px; border-bottom: 1px solid #8090a8; font: 700 15px/14px "DejaVu Sans", sans-serif; text-shadow: 1px 1px 0 #111; }
.vnc-no { color: #0a7d0a; }
.vnc-name { color: #e8e800; }
.vnc-btn { width: 35px; height: 35px; border: 1px solid #7c8ba3; border-radius: 4px; display: flex; align-items: center; justify-content: center; }
.vnc-a { font: 700 9px "DejaVu Sans", sans-serif; fill: #dcdcdc; }
.vnc-handle { margin-top: 35px; width: 15px; height: 50px; background: #48566b; border-radius: 0 6px 6px 0; box-shadow: 3px 3px 0 #181818; display: flex; align-items: center; justify-content: center; }
```
